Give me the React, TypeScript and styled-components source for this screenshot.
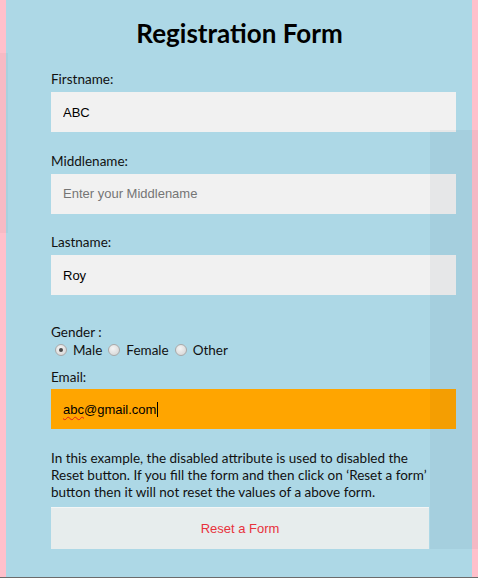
import React from "react";
import styled, { createGlobalStyle } from "styled-components";

const Global = createGlobalStyle`
  html, body {
    margin: 0;
    padding: 0;
    background: #ffffff;
  }
  body {
    font-family: "Lato", "Open Sans", sans-serif;
  }
`;

const Frame = styled.div`
  position: relative;
  height: 577px;
  padding: 0 6px;
  background: #ffc0cb;
  border-bottom: 1px solid #6b6b6b;
  box-sizing: content-box;
  overflow: hidden;
`;

const Container = styled.div`
  height: 100%;
  background: #add8e6;
  padding: 0 16px 0 45px;
  display: flex;
  flex-direction: column;
`;

const Title = styled.h1`
  margin: 17px 0 21px;
  font-size: 26px;
  line-height: 32px;
  font-weight: 700;
  text-align: center;
  color: #000;
  transform: translateX(-14px);
`;

const Label = styled.label<{ $gap?: number }>`
  display: block;
  margin-top: ${(p) => p.$gap ?? 0}px;
  font-size: 13.5px;
  line-height: 18px;
  color: #111;
`;

const Field = styled.input`
  display: block;
  width: 100%;
  height: 40px;
  box-sizing: border-box;
  margin: 4px 0 0;
  padding: 12px;
  border: none;
  outline: none;
  background: #f1f1f1;
  font-family: "Liberation Sans", Arial, sans-serif;
  font-size: 13px;
  color: #000;
  &::placeholder {
    color: #757575;
  }
`;

const EmailBox = styled.div`
  display: flex;
  align-items: center;
  height: 40px;
  margin-top: 3px;
  padding: 0 12px;
  background: #ffa500;
  font-family: "Liberation Sans", Arial, sans-serif;
  font-size: 13px;
  color: #000;
`;

const Misspelt = styled.span`
  text-decoration: underline wavy #e02020;
  text-decoration-thickness: 1px;
  text-underline-offset: 2px;
`;

const Caret = styled.span`
  display: inline-block;
  width: 1px;
  height: 15px;
  margin-left: 1px;
  background: #000;
`;

const RadioRow = styled.div`
  display: flex;
  align-items: center;
  height: 18px;
  padding-left: 4px;
`;

const RadioOption = styled.label`
  display: flex;
  align-items: center;
  font-size: 13.5px;
  line-height: 18px;
  color: #111;
  margin-right: 6px;
`;

const RadioDot = styled.span<{ $checked?: boolean }>`
  position: relative;
  width: 12px;
  height: 12px;
  margin-right: 6px;
  border-radius: 50%;
  box-sizing: border-box;
  border: 1px solid #a9a9a9;
  background: radial-gradient(circle at 40% 35%, #f4f4f4 0%, #dcdcdc 70%, #cfcfcf 100%);
  &::after {
    content: "";
    display: ${(p) => (p.$checked ? "block" : "none")};
    position: absolute;
    left: 3px;
    top: 3px;
    width: 4px;
    height: 4px;
    border-radius: 50%;
    background: #4a4a4a;
  }
`;

const Note = styled.p`
  width: 378px;
  margin: 20.5px 0 0;
  font-size: 13.5px;
  line-height: 17px;
  color: #111;
`;

const ResetButton = styled.button`
  margin-top: 6.5px;
  width: 378px;
  height: 42px;
  border: none;
  border-top: 1px solid #f3f6f6;
  background: #e7eded;
  font-family: "Liberation Sans", Arial, sans-serif;
  font-size: 13px;
  color: #e8323c;
  cursor: default;
`;

const Shade = styled.div<{ $tone: string }>`
  position: absolute;
  pointer-events: none;
  background: ${(p) => p.$tone};
`;

const genders = ["Male", "Female", "Other"];

const App = () => {
  return (
    <>
      <Global />
      <Frame>
        <Container>
          <Title>Registration Form</Title>

          <Label>Firstname:</Label>
          <Field type="text" defaultValue="ABC" />

          <Label $gap={19.5}>Middlename:</Label>
          <Field type="text" placeholder="Enter your Middlename" />

          <Label $gap={19.5}>Lastname:</Label>
          <Field type="text" defaultValue="Roy" />

          <Label $gap={28}>Gender :</Label>
          <RadioRow>
            {genders.map((g) => (
              <RadioOption key={g}>
                <RadioDot $checked={g === "Male"} />
                {g}
              </RadioOption>
            ))}
          </RadioRow>

          <Label $gap={9}>Email:</Label>
          <EmailBox>
            <Misspelt>abc</Misspelt>@gmail.com
            <Caret />
          </EmailBox>

          <Note>
            In this example, the disabled attribute is used to disabled the Reset button. If you
            fill the form and then click on ‘Reset a form’ button then it will not reset the
            values of a above form.
          </Note>

          <ResetButton type="button" disabled>
            Reset a Form
          </ResetButton>
        </Container>

        {/* faint window shadows sitting over the page */}
        <Shade $tone="rgba(0, 20, 40, 0.045)" style={{ left: 430, top: 130, width: 48, height: 419 }} />
        <Shade $tone="rgba(0, 0, 0, 0.03)" style={{ left: 0, top: 53, width: 8, height: 180 }} />
      </Frame>
    </>
  );
};

export default App;
